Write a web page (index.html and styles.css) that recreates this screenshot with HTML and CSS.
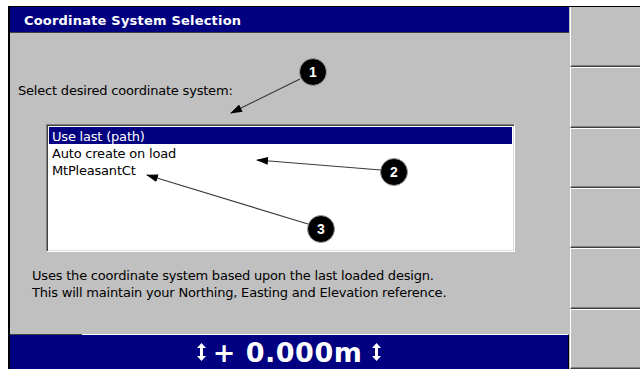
FILE: index.html
```html
<!DOCTYPE html>
<html>
<head>
<meta charset="utf-8">
<link rel="stylesheet" href="styles.css">
</head>
<body>
<div class="frame">
  <div class="main">
    <div class="titlebar">Coordinate System Selection</div>
    <div class="content">
      <p class="prompt">Select desired coordinate system:</p>
      <div class="listbox">
        <div class="item selected">Use last (path)</div>
        <div class="item">Auto create on load</div>
        <div class="item">MtPleasantCt</div>
      </div>
      <p class="desc">Uses the coordinate system based upon the last loaded design.<br>This will maintain your Northing, Easting and Elevation reference.</p>
    </div>
    <div class="statusbar">
      <svg class="updown" width="9" height="18" viewBox="0 0 9 18"><path d="M4.5 0 L9 5 L6 5 L6 13 L9 13 L4.5 18 L0 13 L3 13 L3 5 L0 5 Z" fill="#fff"/></svg>
      <span class="value">+ 0.000m</span>
      <svg class="updown" width="9" height="18" viewBox="0 0 9 18"><path d="M4.5 0 L9 5 L6 5 L6 13 L9 13 L4.5 18 L0 13 L3 13 L3 5 L0 5 Z" fill="#fff"/></svg>
    </div>
  </div>
  <div class="side">
    <div class="softkey"></div>
    <div class="softkey"></div>
    <div class="softkey"></div>
    <div class="softkey"></div>
    <div class="softkey"></div>
    <div class="softkey"></div>
  </div>
</div>
<svg class="callouts" width="640" height="369" viewBox="0 0 640 369">
  <defs>
    <marker id="ah" markerWidth="12" markerHeight="8" refX="11" refY="4" orient="auto" markerUnits="userSpaceOnUse">
      <path d="M0 0 L12 4 L0 8 Z" fill="#000"/>
    </marker>
  </defs>
  <g stroke="#3a3a3a" stroke-width="1.2" fill="none">
    <line x1="300" y1="79" x2="231" y2="113" marker-end="url(#ah)"/>
    <line x1="381" y1="170" x2="257" y2="160" marker-end="url(#ah)"/>
    <line x1="308" y1="224" x2="147" y2="175" marker-end="url(#ah)"/>
  </g>
  <g fill="#000" stroke="#9a9a9a" stroke-width="1">
    <circle cx="313" cy="72" r="13.5"/>
    <circle cx="394" cy="172" r="13.5"/>
    <circle cx="321" cy="229" r="13.5"/>
  </g>
  <g class="num" fill="#fff" text-anchor="middle">
    <text x="313" y="77">1</text>
    <text x="394" y="177">2</text>
    <text x="321" y="234">3</text>
  </g>
</svg>
</body>
</html>
```
FILE: styles.css
```css
html, body { margin: 0; padding: 0; background: #fff; }
body { width: 640px; height: 369px; overflow: hidden; position: relative; font-family: "DejaVu Sans", "Liberation Sans", sans-serif; font-size: 13px; letter-spacing: -0.2px; }
.frame { margin: 6px 0 0 8px; border-top: 1px solid #000; border-left: 2px solid #000; height: 362px; display: flex; background: #c0c0c0; }
.main { width: 560px; display: flex; flex-direction: column; }
.titlebar { height: 23px; padding: 2px 0 0 14px; line-height: 23px; background: #000080; color: #fff; font-weight: bold; letter-spacing: 0.2px; border-bottom: 1px solid #404040; }
.content { flex: 1; display: flex; flex-direction: column; }
.prompt { margin: 50px 0 0 8px; line-height: 16px; color: #000; }
.listbox { margin: 25px 0 0 36px; width: 463px; height: 124px; background: #fff; border: 1px solid; border-color: #808080 #fff #fff #808080; box-shadow: inset 1px 1px 0 #404040, inset -1px -1px 0 #dfdfdf; padding: 2px 2px 0 2px; }
.item { height: 17px; line-height: 14px; padding: 3px 0 0 3px; box-sizing: border-box; color: #000; white-space: nowrap; }
.item.selected { background: #000080; color: #fff; }
.desc { margin: 15px 0 0 22px; line-height: 17px; color: #000; }
.statusbar { height: 34px; background: #000080; border-top: 1px solid #fff; border-right: 1px solid #000; position: relative; display: flex; align-items: center; justify-content: center; gap: 7px; color: #fff; }
.statusbar::before { content: ""; position: absolute; left: 0; top: -1px; width: 72px; height: 1px; background: #404040; }
.value { font-family: "DejaVu Sans", sans-serif; font-weight: bold; font-size: 27px; letter-spacing: 0.5px; margin-right: 3px; }
.side { width: 70px; padding-left: 1px; display: flex; flex-direction: column; }
.softkey { flex: 1; border-left: 1px solid #fff; border-top: 1px solid #fff; border-bottom: 1px solid #404040; box-shadow: inset 0 -1px 0 #808080; }
.softkey:first-child { border-top-color: #c0c0c0; }
.callouts { position: absolute; left: 0; top: 0; pointer-events: none; }
.num { font-family: "Liberation Sans", sans-serif; font-weight: bold; font-size: 14px; letter-spacing: 0; }
```
